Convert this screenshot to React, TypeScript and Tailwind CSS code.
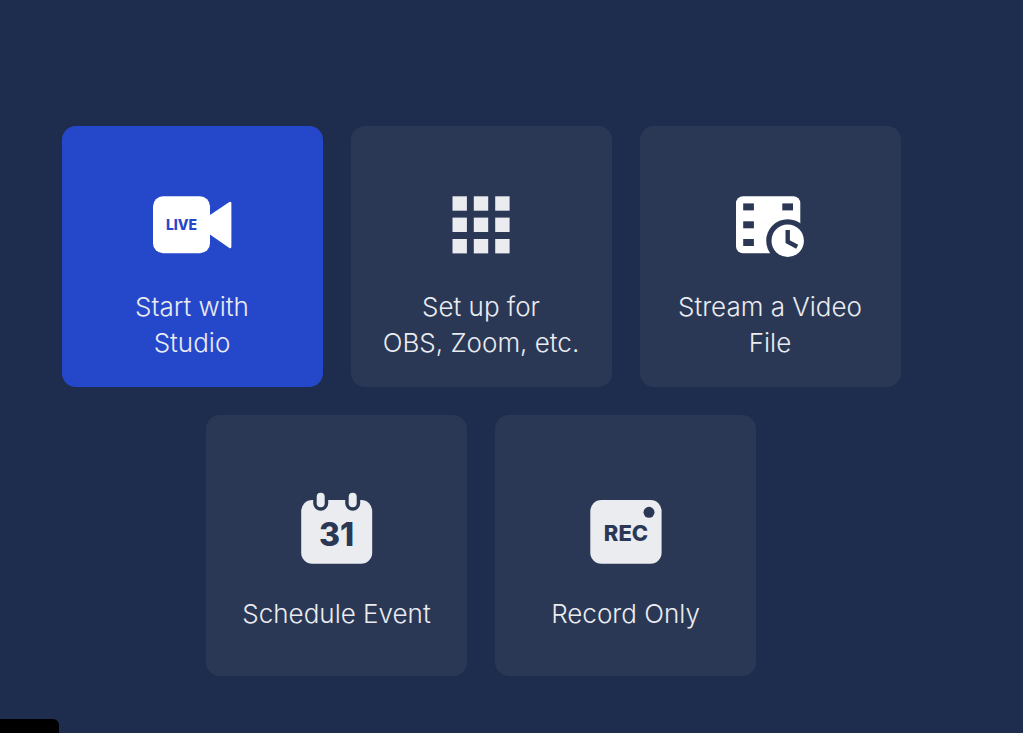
import type { ReactNode } from 'react';
import clsx from 'clsx';

function LiveIcon() {
  return (
    <svg width="79" height="61" viewBox="0 0 79 61" aria-hidden="true">
      <rect y="0.3" width="57" height="57" rx="10" fill="#fff" />
      <path d="M57 19 L76 6.2 Q78.4 4.9 78.4 7.5 V50.5 Q78.4 53.3 76 51.8 L57 38.5Z" fill="#fff" />
      <text x="28.5" y="33.6" textAnchor="middle" className="fill-[#2548cb] font-['Inter',sans-serif] text-[14px] font-extrabold">
        LIVE
      </text>
    </svg>
  );
}

function GridIcon() {
  const steps = [0, 21.3, 42.7];
  return (
    <svg width="59" height="61" viewBox="0 0 59 61" fill="#eaecf0" aria-hidden="true">
      {steps.map((y) =>
        steps.map((x) => <rect key={`${x}-${y}`} x={x + 0.5} y={y + 0.3} width="14.4" height="14.4" />)
      )}
    </svg>
  );
}

function FilmIcon() {
  return (
    <svg width="68" height="61" viewBox="0 0 68 61" aria-hidden="true">
      <rect y="0.3" width="64.3" height="57" rx="7" fill="#fff" />
      <g fill="#2a3856">
        <rect x="7.2" y="7.4" width="10.7" height="7" />
        <rect x="46.3" y="7.4" width="10.7" height="7" />
        <rect x="7.2" y="25.3" width="10.7" height="7" />
        <rect x="7.2" y="43" width="10.7" height="7" />
        <circle cx="51.7" cy="44.7" r="21.5" />
      </g>
      <circle cx="51.7" cy="44.7" r="16.2" fill="#fff" />
      <path d="M51.7 34 V45.7 L61.2 50.8" fill="none" stroke="#2a3856" strokeWidth="4.4" />
    </svg>
  );
}

function CalendarIcon() {
  return (
    <svg width="72" height="72" viewBox="0 0 72 72" aria-hidden="true">
      <rect x="0.2" y="8" width="71" height="63.7" rx="11" fill="#eaecf0" />
      <rect x="12.2" y="-3" width="15" height="21.7" rx="7.5" fill="#2a3856" />
      <rect x="44.2" y="-3" width="15" height="21.7" rx="7.5" fill="#2a3856" />
      <rect x="15.7" y="0.7" width="8" height="14.6" rx="4" fill="#eaecf0" />
      <rect x="47.7" y="0.7" width="8" height="14.6" rx="4" fill="#eaecf0" />
      <text x="35.5" y="54.2" textAnchor="middle" className="fill-[#2a3856] font-['Inter',sans-serif] text-[32px] font-extrabold">
        31
      </text>
    </svg>
  );
}

function RecIcon() {
  return (
    <svg width="72" height="72" viewBox="0 0 72 72" aria-hidden="true">
      <rect x="0.3" y="8" width="71.3" height="63.7" rx="11" fill="#eaecf0" />
      <circle cx="59" cy="20.3" r="5.5" fill="#2a3856" />
      <text x="36" y="49" textAnchor="middle" className="fill-[#2a3856] font-['Inter',sans-serif] text-[22px] font-extrabold">
        REC
      </text>
    </svg>
  );
}

interface Option {
  id: string;
  lines: string[];
  icon: ReactNode;
  primary?: boolean;
}

const options: Option[] = [
  { id: 'studio', lines: ['Start with', 'Studio'], icon: <LiveIcon />, primary: true },
  { id: 'encoder', lines: ['Set up for', 'OBS, Zoom, etc.'], icon: <GridIcon /> },
  { id: 'file', lines: ['Stream a Video', 'File'], icon: <FilmIcon /> },
  { id: 'schedule', lines: ['Schedule Event'], icon: <CalendarIcon /> },
  { id: 'record', lines: ['Record Only'], icon: <RecIcon /> },
];

function OptionCard({ option }: { option: Option }) {
  return (
    <button
      type="button"
      className={clsx(
        'flex aspect-square w-[261px] cursor-pointer flex-col items-center justify-center rounded-[14px] transition-colors',
        option.primary ? 'bg-[#2548cb] hover:bg-[#2f54dc]' : 'bg-[#2a3856] hover:bg-[#334264]'
      )}
    >
      <span className="flex h-[137px] items-end pb-8">{option.icon}</span>
      <span className="text-[26px] leading-9 font-light whitespace-nowrap text-[#eaecf0]">
        {option.lines.map((line) => (
          <span key={line} className="block">{line}</span>
        ))}
      </span>
    </button>
  );
}

export default function App() {
  return (
    <div className="flex min-h-screen flex-col bg-[#1e2d4d] font-['Inter',sans-serif]">
      <main className="flex flex-wrap justify-center gap-7 pt-[126px] pr-[122px] pl-[61px]">
        {options.map((option) => (
          <OptionCard key={option.id} option={option} />
        ))}
      </main>

      {/* Collapsed status tab */}
      <div className="mt-auto h-[14px] w-[59px] rounded-tr-md bg-black" />
    </div>
  );
}
